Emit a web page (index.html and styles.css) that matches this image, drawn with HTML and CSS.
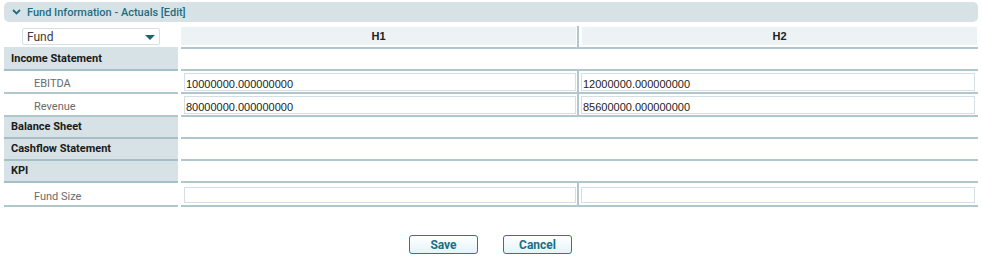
FILE: index.html
```html
<!DOCTYPE html>
<html>
<head>
<meta charset="utf-8">
<link rel="stylesheet" href="styles.css">
</head>
<body>
<div class="panel">
  <div class="title">
    <svg class="chev" width="9" height="6" viewBox="0 0 9 6"><path d="M1 1 L4.5 4.5 L8 1" fill="none" stroke="#1d6e82" stroke-width="1.8"/></svg>
    <span>Fund Information - Actuals [Edit]</span>
  </div>

  <div class="tbl">
    <div class="row head">
      <div class="cell lbl headlbl">
        <div class="select"><span>Fund</span><svg width="10" height="5" viewBox="0 0 10 5"><path d="M0 0 L10 0 L5 5 Z" fill="#1b6478"/></svg></div>
      </div>
      <div class="cell c2 vline"><div class="hbox">H1</div></div>
      <div class="cell c3"><div class="hbox">H2</div></div>
    </div>

    <div class="row sec">
      <div class="cell lbl section">Income Statement</div>
      <div class="cell c2"></div>
      <div class="cell c3"></div>
    </div>

    <div class="row inp">
      <div class="cell lbl sub">EBITDA</div>
      <div class="cell c2 vline"><input class="field" type="text" value="10000000.000000000"></div>
      <div class="cell c3"><input class="field" type="text" value="12000000.000000000"></div>
    </div>

    <div class="row inp">
      <div class="cell lbl sub">Revenue</div>
      <div class="cell c2 vline"><input class="field" type="text" value="80000000.000000000"></div>
      <div class="cell c3"><input class="field" type="text" value="85600000.000000000"></div>
    </div>

    <div class="row sec">
      <div class="cell lbl section">Balance Sheet</div>
      <div class="cell c2"></div>
      <div class="cell c3"></div>
    </div>

    <div class="row sec">
      <div class="cell lbl section">Cashflow Statement</div>
      <div class="cell c2"></div>
      <div class="cell c3"></div>
    </div>

    <div class="row sec">
      <div class="cell lbl section">KPI</div>
      <div class="cell c2"></div>
      <div class="cell c3"></div>
    </div>

    <div class="row inp fund">
      <div class="cell lbl sub">Fund Size</div>
      <div class="cell c2 vline"><input class="field small" type="text" value=""></div>
      <div class="cell c3"><input class="field small" type="text" value=""></div>
    </div>
  </div>

  <div class="actions">
    <button class="btn">Save</button>
    <button class="btn">Cancel</button>
  </div>
</div>
</body>
</html>
```

FILE: styles.css
```css
html, body {
  margin: 0;
  padding: 0;
  background: #ffffff;
}
body {
  font-family: Roboto, "Liberation Sans", Arial, sans-serif;
}
.panel {
  padding: 2px 4px 0 4px;
  width: 974px;
}
.title {
  height: 20px;
  background: #d7e2e6;
  border-radius: 5px;
  display: flex;
  align-items: center;
  padding-left: 8px;
  color: #1d6e82;
  font-size: 11px;
  font-weight: 500;
}
.chev {
  margin-right: 6px;
  margin-top: -1px;
}
.tbl {
  margin-top: 4px;
}
.row {
  display: grid;
  grid-template-columns: 177px 398px 399px;
}
.cell {
  border-bottom: 2px solid #b0c7ce;
  display: flex;
  align-items: center;
  box-sizing: border-box;
}
.row.head { height: 23px; }
.row.sec { height: 22px; }
.row.inp { height: 23px; }
.row.fund { height: 24px; }

.lbl {
  margin-right: 3px;
  font-size: 11px;
}
.headlbl {
  border-bottom-color: #d7e2e6;
  padding-left: 18px;
  align-items: flex-start;
  padding-top: 2px;
}
.section {
  background: #d7e2e6;
  border-bottom-color: #a6bfc7;
  font-weight: 700;
  color: #1a1a1a;
  padding-left: 7px;
  padding-bottom: 1px;
}
.sub {
  color: #6b6b6b;
  padding-left: 30px;
  padding-top: 3px;
}
.fund .sub {
  padding-top: 4px;
}
.vline {
  border-right: 2px solid #b0c7ce;
}
.head .c2 {
  padding: 1px 1px 2px 0;
  align-items: stretch;
}
.head .c3 {
  padding: 1px 1px 2px 3px;
  align-items: stretch;
}
.hbox {
  flex: 1;
  background: #edf2f5;
  display: flex;
  align-items: center;
  justify-content: center;
  font-family: "Liberation Sans", Arial, sans-serif;
  font-size: 11px;
  font-weight: 700;
  color: #222;
}
.select {
  width: 138px;
  height: 17px;
  box-sizing: border-box;
  background: #fff;
  border: 1px solid #d5e0e4;
  border-radius: 2px;
  display: flex;
  align-items: center;
  justify-content: space-between;
  padding: 0 4px 0 4px;
  font-size: 12px;
  color: #3a3a3a;
}
.select svg {
  margin-top: 1px;
}
.inp .c2 {
  padding: 2px 1px 0 3px;
  align-items: flex-start;
}
.inp .c3 {
  padding: 2px 3px 0 2px;
  align-items: flex-start;
}
.fund .c2, .fund .c3 {
  padding-top: 4px;
}
.field {
  flex: 1;
  min-width: 0;
  height: 18px;
  box-sizing: border-box;
  border: 1px solid #d3dfe4;
  margin: 0;
  padding: 3px 1px 0 1px;
  font-family: "Liberation Sans", Arial, sans-serif;
  font-size: 11px;
  color: #222;
  background: #fff;
  outline: none;
}
.field.small {
  height: 16px;
}
.actions {
  display: flex;
  justify-content: center;
  gap: 25px;
  margin-top: 28px;
  padding-right: 1px;
}
.btn {
  width: 69px;
  height: 19px;
  box-sizing: border-box;
  border: 1px solid #2b7a8c;
  border-radius: 3px;
  background: linear-gradient(#ffffff, #e6f3f8);
  color: #1b6f84;
  font-family: Roboto, "Liberation Sans", Arial, sans-serif;
  font-size: 12px;
  font-weight: 700;
  padding: 0;
  margin: 0;
}
```
